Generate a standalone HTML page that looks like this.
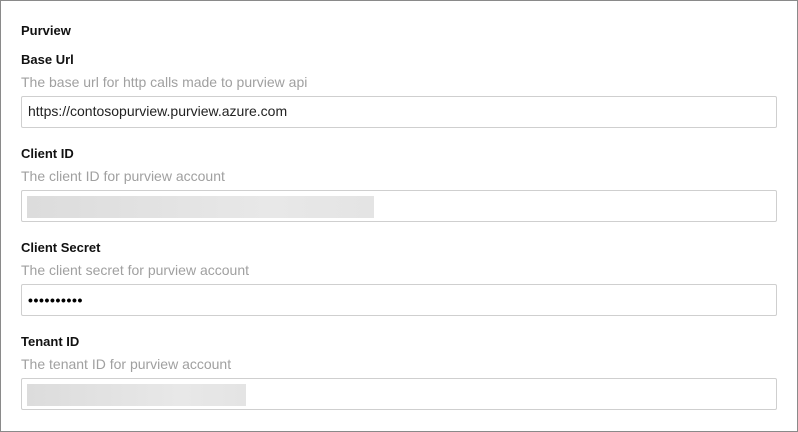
<!DOCTYPE html>
<html><head><meta charset="utf-8"><style>
body{margin:0;width:798px;height:432px;overflow:hidden;background:#fff;font-family:"Segoe UI","Liberation Sans",sans-serif;}
.frame{position:absolute;left:0;top:0;width:796px;height:430px;border:1px solid #8a8a8a;}
.t{position:absolute;left:21px;white-space:nowrap;}
.h{font-weight:bold;font-size:13px;color:#111;}
.d{font-size:14px;color:#a0a0a0;}
.in{position:absolute;left:21px;width:754px;height:30px;border:1px solid #cfcfcf;border-radius:2px;}
.v{position:absolute;left:6px;top:6px;font-size:14px;color:#222;}
.bar{position:absolute;left:5px;top:5px;height:22px;background:linear-gradient(90deg,#dcdcdc,#e8e8e8 70%,#e4e4e4);}
</style></head><body>
<div class="frame"></div>
<div class="t h" style="top:23px">Purview</div>
<div class="t h" style="top:52px">Base Url</div>
<div class="t d" style="top:74px">The base url for http calls made to purview api</div>
<div class="in" style="top:96px"><div class="v">https://contosopurview.purview.azure.com</div></div>
<div class="t h" style="top:146px">Client ID</div>
<div class="t d" style="top:168px">The client ID for purview account</div>
<div class="in" style="top:190px"><div class="bar" style="width:347px"></div></div>
<div class="t h" style="top:240px">Client Secret</div>
<div class="t d" style="top:262px">The client secret for purview account</div>
<div class="in" style="top:284px"><div class="v" style="top:7px;font-size:14px;font-weight:bold;letter-spacing:0.6px;color:#000">••••••••••</div></div>
<div class="t h" style="top:334px">Tenant ID</div>
<div class="t d" style="top:356px">The tenant ID for purview account</div>
<div class="in" style="top:378px"><div class="bar" style="width:219px"></div></div>
</body></html>
